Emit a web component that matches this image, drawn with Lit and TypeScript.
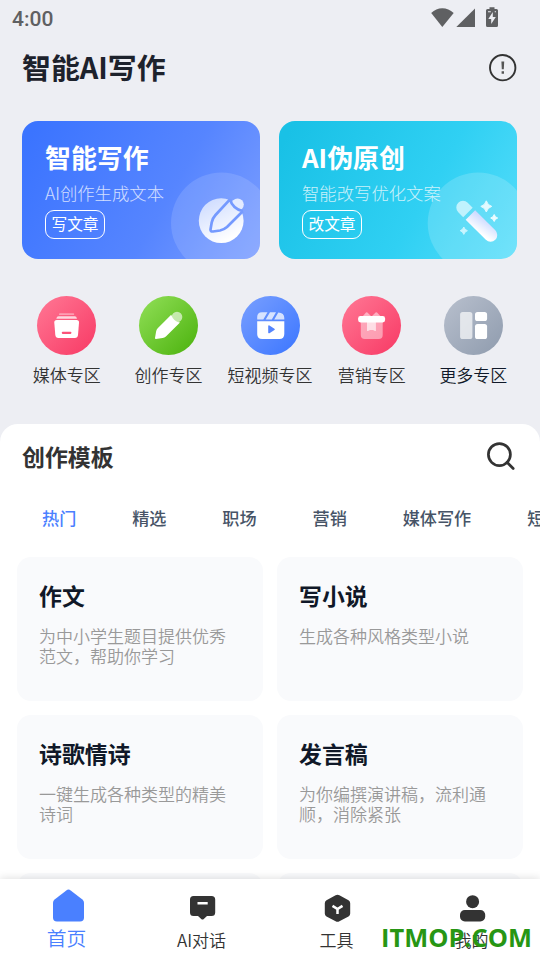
import { LitElement, html, svg, css, nothing } from "lit";
import { customElement } from "lit/decorators.js";
import { classMap } from "lit/directives/class-map.js";

const heroes = [
  {
    tone: "blue",
    title: "智能写作",
    sub: "AI创作生成文本",
    action: "写文章",
    art: svg`
      <defs><linearGradient id="g" x1="0" y1="0" x2=".5" y2="1"><stop offset="0" stop-color="#c9d8ff"/><stop offset="1" stop-color="#fff"/></linearGradient></defs>
      <circle cx="199.5" cy="102" r="50.5" fill="#fff" fill-opacity=".13"/>
      <circle cx="199.2" cy="99.7" r="22.4" fill="url(#g)"/>
      <circle cx="215.6" cy="83.6" r="6.2" fill="#e3ebff"/>
      <path d="M208 78.4L193.5 94Q190.3 97.500 189.700 101.500L188.500 108.500Q188.400 110.700 191 110.500L198 109.500Q202 108.600 205 106L220.800 90.300M208 78.400Q210.500 87.500 220.800 90.300" fill="none" stroke="#759aff" stroke-width="2.7" stroke-linejoin="round"/>`,
  },
  {
    tone: "cyan",
    title: "AI伪原创",
    sub: "智能改写优化文案",
    action: "改文章",
    art: svg`
      <defs><linearGradient id="g" x1="0" y1="0" x2="1" y2="0"><stop offset="0" stop-color="#bdf1fc"/><stop offset="1" stop-color="#fff"/></linearGradient></defs>
      <circle cx="199.200" cy="102" r="50.500" fill="#fff" fill-opacity=".17"/>
      <g transform="translate(184 86.500) rotate(45)">
        <path d="M7 -6.700H0A6.700 6.700 0 0 0 0 6.700H7Z" fill="#c0f2fd"/>
        <path d="M10.500 -6.700H39A6.700 6.700 0 0 1 39 6.700H10.500Z" fill="url(#g)"/>
      </g>
      <path d="M207.300 79.800Q208.600 84.300 212.800 85.400Q208.600 86.600 207.300 91Q206 86.600 201.800 85.400Q206 84.300 207.300 79.800Z" fill="#e2faff" stroke="#e2faff" stroke-linejoin="round"/>
      <path d="M215.200 93.500Q216 96.300 218.700 97Q216 97.800 215.200 100.500Q214.400 97.800 211.700 97Q214.400 96.300 215.200 93.500Z" fill="#ecfcff" stroke="#ecfcff" stroke-linejoin="round"/>
      <path d="M184.800 106Q185.700 108.900 188.400 109.700Q185.700 110.500 184.800 113.400Q183.900 110.500 181.200 109.700Q183.900 108.900 184.800 106Z" fill="#c9f5ff" stroke="#c9f5ff" stroke-linejoin="round"/>`,
  },
];

const zones = [
  {
    label: "媒体专区",
    tone: "rose",
    art: svg`<rect x="22" y="17.200" width="15.200" height="1.900" rx=".9" opacity=".4"/>
      <path d="M21.500 20.300H37.800Q39.500 20.300 40 22.700H19.300Q19.800 20.300 21.500 20.300Z" opacity=".75"/>
      <path d="M19.800 24H39.500Q42.200 24 42 26.700L41 39Q40.700 42 37.800 42H21.500Q18.600 42 18.300 39L17.300 26.700Q17.100 24 19.800 24Z"/>
      <rect x="24.800" y="35.800" width="9.600" height="2.100" rx=".8" fill="#fb5279"/>`,
  },
  {
    label: "创作专区",
    tone: "green",
    art: svg`<circle cx="38" cy="21" r="5.300" opacity=".6"/>
      <path d="M32.200 18.700L18.700 32.200Q17.400 33.600 17.100 35.500L16 42Q15.900 43.100 17 43L23.600 42Q25.500 41.700 26.900 40.400L41 26.600Q34.500 25.500 32.200 18.700Z"/>`,
  },
  {
    label: "短视频专区",
    tone: "azure",
    art: svg`<path d="M21 16.300H26.500L22.300 23.400H16.200V21Q16.200 16.300 21 16.300ZM29 16.300H35L30.800 23.400H24.700ZM37.300 16.500Q43.300 16.700 43.300 22V23.400H33.200Z" opacity=".75"/>
      <path d="M16.200 25.200H43.300V38Q43.300 43 38.300 43H21.200Q16.200 43 16.200 38Z"/>
      <path d="M28 30.100L33 33.300L28 36.500Z" fill="#5585fe" stroke="#5585fe" stroke-width="1.600" stroke-linejoin="round"/>`,
  },
  {
    label: "营销专区",
    tone: "rose",
    art: svg`<path d="M20.500 20.500L24 16.600Q24.700 16 25.400 16.600L29.500 20.500L33.600 16.600Q34.300 16 35 16.600L38.800 20.500Z" opacity=".5"/>
      <path d="M18.800 26H40.700V39Q40.700 43 36.700 43H22.800Q18.800 43 18.800 39Z" opacity=".45"/>
      <path d="M25 26H33.900V34.500Q33.700 35.300 33 34.900L31 33.900H28L26 34.900Q25.100 35.300 25 34.500Z" opacity=".65"/>
      <rect x="16.100" y="20" width="27" height="6.400" rx="2.400"/>`,
  },
  {
    label: "更多专区",
    tone: "slate",
    art: svg`<rect x="16.100" y="16.100" width="12.300" height="26.900" rx="2.600" opacity=".68"/>
      <rect x="31" y="16.100" width="12.100" height="9" rx="2.600"/>
      <rect x="31" y="28" width="12.100" height="15" rx="2.600"/>`,
  },
];

const tabs = ["热门", "精选", "职场", "营销", "媒体写作", "短视频"];

const templates = [
  ["作文", "为中小学生题目提供优秀范文，帮助你学习"],
  ["写小说", "生成各种风格类型小说"],
  ["诗歌情诗", "一键生成各种类型的精美诗词"],
  ["发言稿", "为你编撰演讲稿，流利通顺，消除紧张"],
  ["", ""],
  ["", ""],
];

const navItems = [
  {
    label: "首页",
    art: svg`<path d="M27.300 1.400Q29.500 -.2 31.700 1.400L43.400 10.400Q45 11.700 45 13.700V28.500Q45 32.500 41 32.500H18Q14 32.500 14 28.500V13.700Q14 11.700 15.600 10.400Z"/>`,
  },
  {
    label: "AI对话",
    art: svg`<path d="M19 7H38.500Q42.200 7 42.200 10.500V23.500Q42.200 27 38.500 27H34L30.500 30.200Q29.500 31 28.500 30.200L25 27H20.500Q17 27 17 23.500V10.500Q17 7 20.500 7Z"/><rect x="24.500" y="13" width="10.200" height="2.500" fill="#fff"/>`,
  },
  {
    label: "工具",
    art: svg`<path d="M27.600 6.300Q29.500 5.200 31.400 6.300L40.500 11.200Q42.200 12.200 42.200 14.200V24.500Q42.200 26.400 40.500 27.400L31.400 32.200Q29.500 33.200 27.600 32.200L18.500 27.400Q16.800 26.400 16.800 24.500V14.200Q16.800 12.200 18.500 11.200Z"/><path d="M24.500 16.900L29.500 20L34.500 16.900M29.500 20V25" fill="none" stroke="#fff" stroke-width="2.500"/>`,
  },
  {
    label: "我的",
    art: svg`<circle cx="29.600" cy="12.700" r="6.500"/><rect x="17" y="21" width="25.200" height="11.500" rx="4.800"/>`,
  },
];

@customElement("app-root")
export class AppRoot extends LitElement {
  static styles = css`
    :host {
      display: flex;
      flex-direction: column;
      position: relative;
      width: 540px;
      height: 960px;
      overflow: hidden;
      background: #edeef3;
      font-family: "Noto Sans CJK SC", sans-serif;
      color: #333;
    }
    * { box-sizing: border-box; }
    svg { display: block; flex: none; }
    .status, .bar, .heroes, .zones { flex: none; }
    .status {
      display: flex;
      justify-content: space-between;
      height: 38px;
      padding: 0 41px 0 12px;
      font: 500 21px/38px Roboto, sans-serif;
      color: #5f6062;
    }
    .bar {
      display: flex;
      align-items: center;
      justify-content: space-between;
      height: 60px;
      padding: 0 23px 0 22px;
      font-size: 28.900px;
      font-weight: 700;
      color: #1d222c;
    }
    .bar span { padding-bottom: 4px; }
    .heroes { display: flex; gap: 19px; padding: 23px 22px 0; }
    .hero {
      position: relative;
      width: 238px;
      height: 138px;
      padding: 17px 0 0 23px;
      border-radius: 16px;
      overflow: hidden;
      color: #fff;
      white-space: nowrap;
    }
    .hero.blue { background: linear-gradient(120deg, #3b74ff 5%, #5685ff 60%, #7d9fff); }
    .hero.cyan { background: linear-gradient(120deg, #19c1e6 5%, #30d0f3 60%, #56ddfa); }
    .hero-art { position: absolute; left: 0; top: 0; }
    .hero-title { position: relative; height: 39px; line-height: 38px; font-size: 25.900px; font-weight: 700; }
    .hero-sub { position: relative; height: 32px; line-height: 32px; font-size: 17.350px; font-weight: 300; opacity: .75; }
    .hero-action {
      position: relative;
      width: 60px;
      height: 29px;
      margin-top: 1px;
      border: 1.500px solid #fff;
      border-radius: 9px;
      font-size: 15.700px;
      line-height: 26px;
      text-align: center;
    }
    .zones { display: flex; padding: 37px 0 0 16px; height: 165px; }
    .zone { width: 101.650px; display: flex; flex-direction: column; align-items: center; font-size: 17px; line-height: 25px; white-space: nowrap; font-weight: 350; }
    .zone:last-child { color: #101828; }
    .disc { width: 59px; height: 59px; margin-bottom: 7px; border-radius: 50%; fill: #fff; }
    .rose { background: linear-gradient(135deg, #ff7391 8%, #f83e68 92%); }
    .green { background: linear-gradient(135deg, #8cdc52 8%, #50b512 92%); }
    .azure { background: linear-gradient(135deg, #749cff 8%, #4079ff 92%); }
    .slate { background: linear-gradient(135deg, #b5bdcb 8%, #929eb0 92%); }
    .sheet { flex: 1; min-height: 0; background: #fff; border-radius: 18px 18px 0 0; }
    .sheet-head { display: flex; align-items: center; justify-content: space-between; height: 65px; padding: 0 24px 0 22px; font-size: 22.900px; font-weight: 700; }
    .sheet-head span { padding-bottom: 2px; }
    .tabs { display: flex; height: 68px; padding-left: 14px; font-size: 17.150px; line-height: 58px; font-weight: 500; color: #475467; white-space: nowrap; overflow: hidden; }
    .tab { padding: 0 27.900px 0 28px; flex: none; }
    .tab.on { color: #4a80ff; }
    .grid { display: grid; grid-template-columns: 246px 246px; grid-auto-rows: 144px; gap: 14px; padding: 0 17px; }
    .card { padding: 20px 22px; border-radius: 14px; background: #f9fafc; }
    .card-title { height: 49px; line-height: 37px; font-size: 22.900px; font-weight: 700; color: #101828; }
    .card-desc { width: 190px; font-size: 17px; line-height: 20px; font-weight: 350; color: #999; }
    .nav { position: absolute; left: 0; right: 0; bottom: 0; display: flex; height: 81px; background: #fff; box-shadow: 0 -1px 8px rgba(0, 0, 0, .12); }
    .item { flex: 1; display: flex; flex-direction: column; align-items: center; padding: 10px 2px 0 0; font-size: 17px; line-height: 35px; fill: #333; }
    .item.on { color: #4a80ff; fill: #4a80ff; font-size: 19.800px; line-height: 32px; padding-right: 2px; }
    .item svg { margin-left: 1px; }
    .item.on svg { margin-left: 3px; }
    .item span { font-weight: 350; }
    .mark { position: absolute; left: 381px; top: 919px; font: 700 25.450px/36px "Open Sans", sans-serif; color: #279614; white-space: nowrap; }
  `;

  render() {
    return html`
      <div class="status">
        <span>4:00</span>
        <svg width="68" height="38" viewBox="431 0 68 38" fill="#5f6062">
          <path d="M442.300 27L431.200 13Q436 8.200 442.300 8.200T453.700 13Z" />
          <path d="M475 8.500V27H456.300Z" />
          <path d="M489.500 7.200H494.500V9H496.500Q498 9 498 10.500V25.500Q498 27 496.500 27H487.500Q486 27 486 25.500V10.500Q486 9 487.500 9H489.500Z" />
          <path d="M492.800 12L488.300 19H491.200V24L495.800 17H492.800ZM488 11.200H490.800V12.200H488ZM494.700 11.200H496V12.200H494.700Z" fill="#edeef3" />
        </svg>
      </div>
      <div class="bar">
        <span>智能AI写作</span>
        <svg width="28" height="28" viewBox="0 0 28 28">
          <circle cx="13.700" cy="13.700" r="12.700" fill="none" stroke="#333" stroke-width="1.900" />
          <path d="M12.400 7.500H15.200L14.800 15.300H12.800ZM12.600 17.300H15V19.700H12.600Z" fill="#555" />
        </svg>
      </div>
      <div class="heroes">
        ${heroes.map(
          (h) => html`<div class="hero ${h.tone}">
            <svg class="hero-art" width="238" height="138" viewBox="0 0 238 138">${h.art}</svg>
            <div class="hero-title">${h.title}</div>
            <div class="hero-sub">${h.sub}</div>
            <div class="hero-action">${h.action}</div>
          </div>`
        )}
      </div>
      <div class="zones">
        ${zones.map(
          (z) => html`<div class="zone">
            <svg class="disc ${z.tone}" viewBox="0 0 59 59">${z.art}</svg>
            <span>${z.label}</span>
          </div>`
        )}
      </div>
      <div class="sheet">
        <div class="sheet-head">
          <span>创作模板</span>
          <svg width="30" height="30" viewBox="0 0 30 30" fill="none" stroke="#333" stroke-width="2.700">
            <circle cx="13.400" cy="12.600" r="11" /><path d="M21 20.200L27.200 26.500" stroke-linecap="round" />
          </svg>
        </div>
        <div class="tabs">${tabs.map((t, i) => html`<span class=${classMap({ tab: true, on: i === 0 })}>${t}</span>`)}</div>
        <div class="grid">
          ${templates.map(
            ([title, desc]) => html`<div class="card">
              ${title ? html`<div class="card-title">${title}</div><div class="card-desc">${desc}</div>` : nothing}
            </div>`
          )}
        </div>
      </div>
      <div class="nav">
        ${navItems.map(
          (n, i) => html`<div class=${classMap({ item: true, on: i === 0 })}>
            <svg width="59" height="33" viewBox="0 0 59 33">${n.art}</svg>
            <span>${n.label}</span>
          </div>`
        )}
      </div>
      <div class="mark">ITMOP.COM</div>
    `;
  }
}
